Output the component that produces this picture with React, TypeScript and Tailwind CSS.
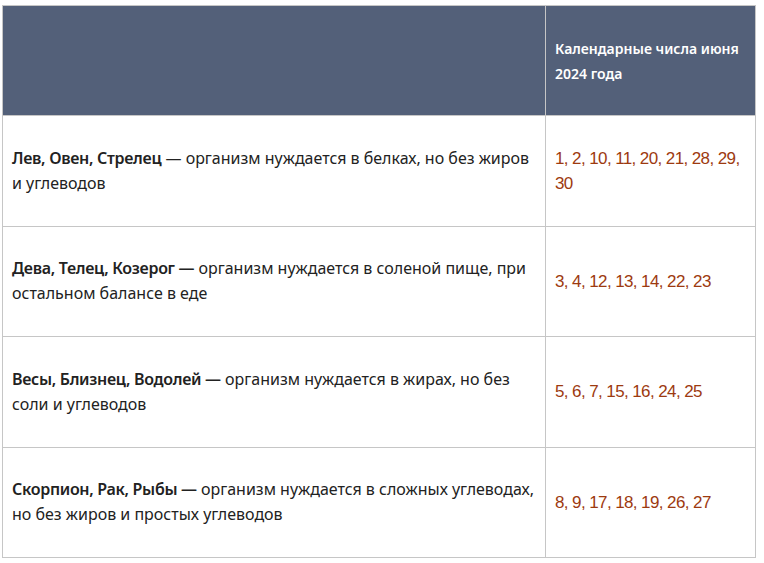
import React from 'react';

const rows = [
  {
    signs: 'Лев, Овен, Стрелец',
    text: 'организм нуждается в белках, но без жиров и углеводов',
    dates: '1, 2, 10, 11, 20, 21, 28, 29, 30',
  },
  {
    signs: 'Дева, Телец, Козерог —',
    text: 'организм нуждается в соленой пище, при остальном балансе в еде',
    dates: '3, 4, 12, 13, 14, 22, 23',
  },
  {
    signs: 'Весы, Близнец, Водолей —',
    text: 'организм нуждается в жирах, но без соли и углеводов',
    dates: '5, 6, 7, 15, 16, 24, 25',
  },
  {
    signs: 'Скорпион, Рак, Рыбы —',
    text: 'организм нуждается в сложных углеводах, но без жиров и простых углеводов',
    dates: '8, 9, 17, 18, 19, 26, 27',
  },
];

const App: React.FC = () => {
  return (
    <div className="bg-white pt-[5px] pl-[2px] font-['Noto_Sans',sans-serif]">
      <table className="w-[754px] border-collapse table-fixed">
        <colgroup>
          <col className="w-[543px]" />
          <col />
        </colgroup>
        <thead>
          <tr className="h-[110px] bg-[#536079]">
            <th className="border border-[#c6c6c6]" />
            <th className="border border-[#c6c6c6] pl-[9px] pr-[8px] text-left align-middle text-[14px] leading-[25px] font-semibold text-white">
              Календарные числа июня 2024 года
            </th>
          </tr>
        </thead>
        <tbody>
          {rows.map((row) => (
            <tr key={row.signs} className="h-[110.5px]">
              <td className="border border-[#c6c6c6] pl-[9px] pr-[6px] align-middle text-[16px] leading-[25px] text-[#222222]">
                <span className="font-semibold tracking-[-0.3px]">{row.signs}</span>
                {row.signs.endsWith('—') ? ' ' : ' — '}
                {row.text}
              </td>
              <td className="border border-[#c6c6c6] pl-[9px] pr-[8px] align-middle text-[17px] leading-[25px] text-[#9d3a10] font-['Liberation_Sans',sans-serif] tracking-[-0.6px]">
                {row.dates}
              </td>
            </tr>
          ))}
        </tbody>
      </table>
    </div>
  );
};

export default App;
